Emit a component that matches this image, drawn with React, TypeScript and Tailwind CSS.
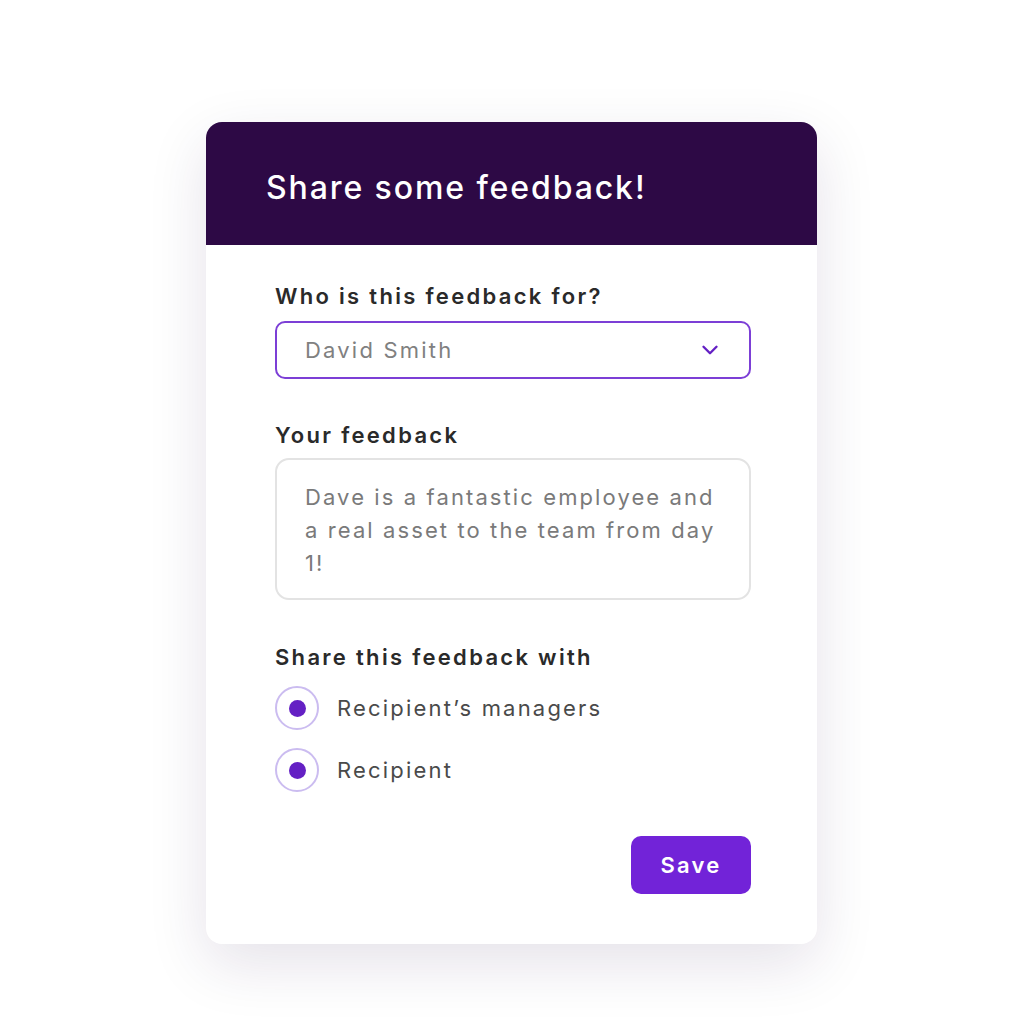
import { ChevronDown } from "lucide-react";

const font = { fontFamily: "Inter, 'Noto Sans', sans-serif" };

function Radio({ label }: { label: string }) {
  return (
    <label className="flex items-center gap-[18px]">
      <span className="w-[44px] h-[44px] rounded-full border-2 border-[#cbbcf0] flex items-center justify-center bg-white">
        <span className="w-[17px] h-[17px] rounded-full bg-[#6420c4]" />
      </span>
      <span className="text-[22px] text-[#4a4a4a] tracking-[2.2px]">{label}</span>
    </label>
  );
}

export default function App() {
  return (
    <div className="min-h-screen bg-white pt-[122px] pl-[206px]" style={font}>
      <div className="w-[611px] bg-white rounded-[16px] overflow-hidden shadow-[0_20px_60px_rgba(40,20,70,0.12)]">
        {/* Header */}
        <div className="h-[123px] bg-[#2d0945] flex items-center pl-[60px] pt-[8px]">
          <h1 className="text-[32px] font-medium text-white tracking-[1.9px]">Share some feedback!</h1>
        </div>

        {/* Body */}
        <div className="pl-[69px] pr-[66px] pt-[36px] pb-[50px]">
          <p className="text-[22px] leading-[30px] font-semibold text-[#2a2a2a] tracking-[2.3px]">Who is this feedback for?</p>
          <div className="mt-[10px] h-[58px] rounded-[10px] border-2 border-[#7c3fd6] flex items-center justify-between pl-[28px] pr-[26px]">
            <span className="text-[22px] text-[#808080] tracking-[2.2px]">David Smith</span>
            <ChevronDown size={26} strokeWidth={2.2} className="text-[#6420c4]" />
          </div>

          <p className="mt-[41px] text-[22px] leading-[30px] font-semibold text-[#2a2a2a] tracking-[2.3px]">Your feedback</p>
          <div className="mt-[8px] h-[142px] rounded-[14px] border-2 border-[#e3e3e3] pl-[28px] pr-[24px] pt-[21px]">
            <p className="text-[22px] leading-[33px] text-[#7a7a7a] tracking-[2.1px]">
              Dave is a fantastic employee and a real asset to the team from day 1!
            </p>
          </div>

          <p className="mt-[42px] text-[22px] leading-[30px] font-semibold text-[#2a2a2a] tracking-[2.3px]">Share this feedback with</p>
          <div className="mt-[14px] flex flex-col gap-[18px]">
            <Radio label="Recipient’s managers" />
            <Radio label="Recipient" />
          </div>

          <div className="mt-[44px] flex justify-end">
            <button className="w-[120px] h-[58px] rounded-[10px] bg-[#7223d8] text-white text-[22px] font-semibold tracking-[2.2px]">
              Save
            </button>
          </div>
        </div>
      </div>
    </div>
  );
}
